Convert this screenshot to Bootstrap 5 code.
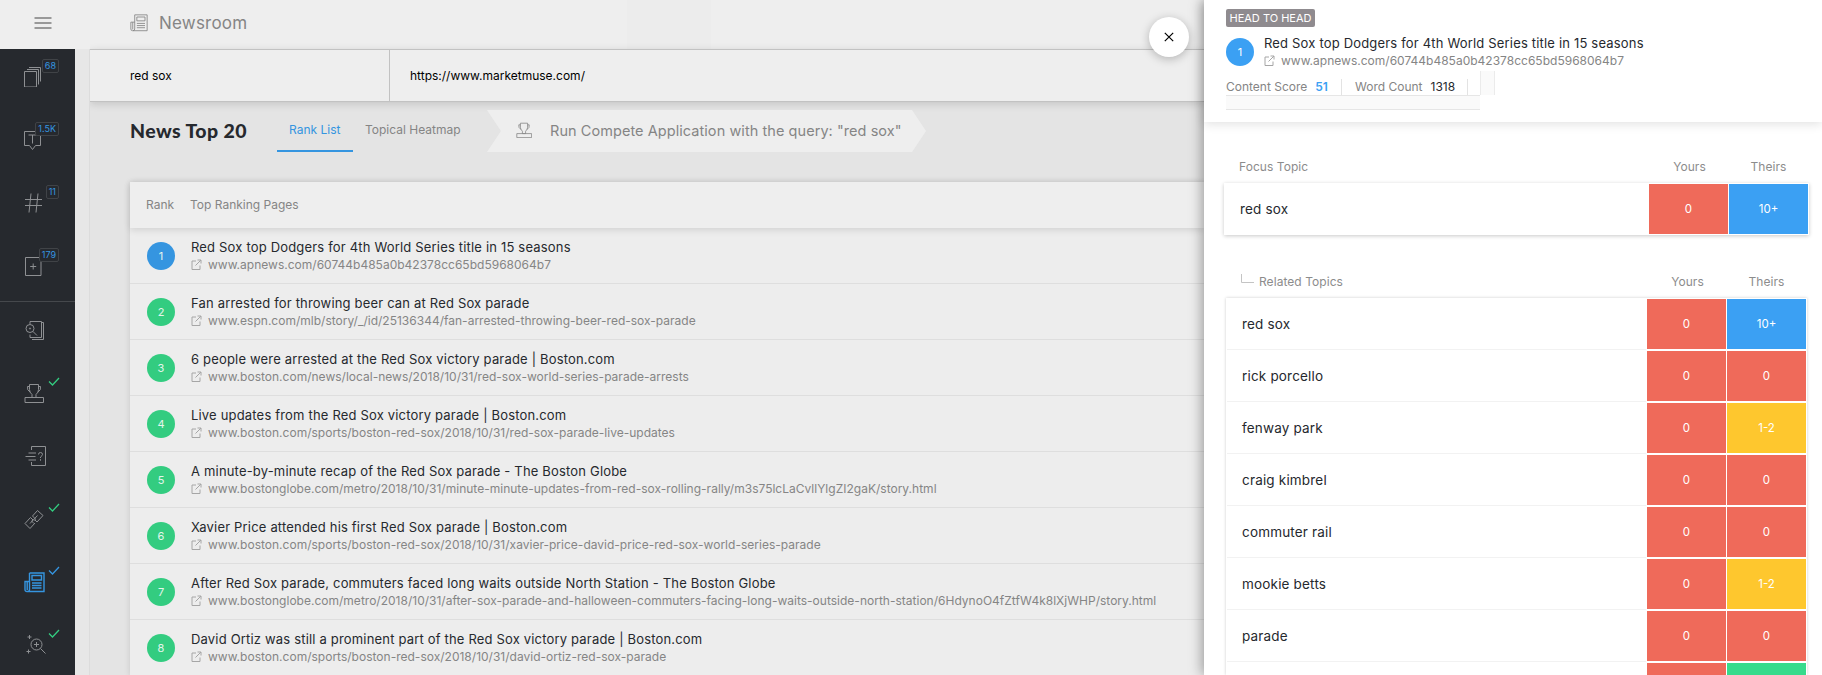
<!DOCTYPE html>
<html lang="en">
<head>
<meta charset="utf-8">
<meta name="viewport" content="width=device-width, initial-scale=1">
<title>Newsroom</title>
<link href="https://cdn.jsdelivr.net/npm/bootstrap@5.3.0/dist/css/bootstrap.min.css" rel="stylesheet">
<style>
  body { font-family: Inter, "Liberation Sans", sans-serif; font-size: 13px; line-height: 16px; color: #26292e; background: #e4e4e4; height: 675px; overflow: hidden; }
  svg { fill: none; stroke: currentColor; display: block; }
  .ink-muted { color: #858585; }
  .rail { width: 75px; height: 675px; overflow: hidden; }
  .rail-top { height: 49px; background: #eee; color: #999; padding-left: 34px; }
  .rail-menu { background: #26292e; color: #8e9093; }
  .rail-item { height: 63px; padding: 12px 0 0 24px; }
  .rail-item svg { width: 20px; height: 20px; margin-top: 6px; }
  .rail-rule { height: 1px; background: #45484c; }
  .count { position: absolute; right: 16px; top: 10px; height: 14px; padding: 0 2px; border: 1px solid #404347; border-radius: 2px; background: #26292e; color: #3595e0; font-size: 9px; line-height: 12px; }
  .rail-item svg.tick { position: absolute; left: 48px; top: 12px; width: 12px; height: 9px; margin: 0; color: #33cc80; }
  .rail-item.is-on, .rail-item.is-on svg.tick { color: #3595e0; }
  .rail-item.is-on svg:first-child { width: 21px; height: 21px; }
  .gutter { width: 15px; background: #e7e7e7; border-right: 1px solid #dcdcdc; }
  .gutter-top { height: 49px; background: #eee; margin-right: -1px; }
  main { min-width: 0; height: 675px; overflow: hidden; }
  .topbar { height: 49px; padding-left: 40px; padding-bottom: 3px; background: linear-gradient(90deg, #eee 537px, #ececec 537px, #ececec 621px, #eee 621px); font-size: 17px; color: #858585; letter-spacing: .2px; }
  .topbar span { padding-left: 3px; }
  .query { height: 53px; background: #eee; border: solid #c2c2c2; border-width: 1px 0; box-shadow: 0 2px 8px rgba(0,0,0,.14); color: #000; font-size: 12px; }
  .query > div:first-child { width: 300px; padding-left: 40px; border-right: 1px solid #c2c2c2; }
  .query > div:last-child { padding-left: 20px; }
  .toolbar { height: 80px; padding-left: 40px; padding-top: 8px; }
  .toolbar h1 { font: 900 19.500px/41px Lato, sans-serif; width: 147px; margin: 0; letter-spacing: .4px; }
  .tab { height: 42px; line-height: 40px; font-size: 12px; color: #858585; padding: 0 12px; border-bottom: 2px solid transparent; white-space: nowrap; }
  .tab.on { width: 76px; color: #3595e0; border-color: #3595e0; }
  .tab.second { width: 119px; }
  .arrow { height: 42px; width: 439px; margin-left: 15px; padding-left: 29px; background: #eee; clip-path: polygon(0 0, 425px 0, 100% 50%, 425px 100%, 0 100%, 14px 50%); font-size: 14.500px; letter-spacing: .06px; color: #858585; }
  .arrow svg { margin-top: -3px; }
  .arrow span { margin-left: 18px; }
  .board { margin-left: 40px; background: #ededed; box-shadow: 0 0 6px rgba(0,0,0,.13); }
  .board-head { height: 46px; padding-left: 16px; color: #858585; font-size: 12px; background: #eee; box-shadow: 0 2px 7px rgba(0,0,0,.12); position: relative; }
  .board-head span:first-child { width: 44px; }
  .story { height: 56px; padding: 1px 0 0 17px; border-bottom: 1px solid #dedede; gap: 16px; white-space: nowrap; }
  .rank { width: 28px; height: 28px; border-radius: 50%; background: #33cc80; color: #e4f5ec; font-size: 11px; flex: none; }
  .rank.lead-one { background: #3595e0; }
  .headline { font-size: 13px; line-height: 17px; letter-spacing: .18px; }
  .link { font-size: 12px; line-height: 17px; letter-spacing: .01px; color: #858585; gap: 6px; }
  .link svg { width: 11px; height: 11px; color: #a6a6a6; }
  .panel { width: 618px; height: 675px; background: #fff; box-shadow: -2px 0 12px rgba(0,0,0,.35); position: relative; z-index: 3; }
  .close-btn { position: absolute; left: -55px; top: 17px; width: 40px; height: 40px; border: 0; border-radius: 50%; background: #fff; box-shadow: 0 2px 10px rgba(0,0,0,.25); }
  .panel-head { height: 122px; padding: 9px 0 0 22px; box-shadow: 0 2px 10px rgba(0,0,0,.12); flex: none; }
  .tagline { display: inline-block; height: 18px; width: 89px; text-align: center; border-radius: 2px; background: #8f8b8f; color: #fff; font-size: 11px; line-height: 18px; }
  .panel .rank { background: #3ba0f3; color: #fff; }
  .duo { margin-top: 8px; gap: 10px; }
  .facts { height: 24px; margin-top: 2px; font-size: 12px; line-height: 15px; }
  .fact-a { width: 116px; } .fact-b { width: 126px; padding-left: 13px; }
  .fact-a, .fact-b { height: 16px; border-right: 1px solid #e3e3e3; }
  .stub { width: 15px; height: 24px; margin-left: 12px; background: #fafafa; border: solid #ebebeb; border-width: 0 1px; }
  .strip { width: 254px; height: 15px; background: #fafafa; border: solid #e6e6e6; border-width: 1px 0; }
  .heads { color: #8c8c8c; font-size: 12px; letter-spacing: .06px; flex: none; }
  .heads span:nth-last-child(-n+2), .score { width: 79px; text-align: center; }
  .focus-heads { padding: 37px 14px 8px 35px; height: 61px; }
  .related-heads { padding: 39px 16px 0 37px; height: 63px; }
  .related-heads svg { margin-right: 5px; color: #c4c4c4; }
  .focus-box { margin: 0 13px 0 20px; box-shadow: 0 1px 4px rgba(0,0,0,.22); height: 52px; padding: 1px; flex: none; }
  .topics { margin: 0 15px 0 22px; box-shadow: 0 0 3px rgba(0,0,0,.2); padding: 1px 1px 0; min-height: 0; overflow: hidden; }
  .topic { height: 52px; gap: 1px; }
  .topic > div:first-child { padding-left: 15px; height: 51px; line-height: 50px; font-size: 13.500px; letter-spacing: .18px; border-bottom: 1px solid #f2f2f2; }
  .focus-box .topic > div:first-child { border: 0; }
  .score { height: 50px; line-height: 50px; color: #fff; font-size: 11.500px; background: #ef6a5a; }
  .score.s-blue { background: #3ba0f3; } .score.s-gold { background: #fec72e; } .score.s-green { background: #37db8c; }
  .score-mark { color: #3ba0f3; }
</style>
</head>
<body class="d-flex">
<svg width="0" height="0" class="position-absolute">
  <symbol id="news" viewBox="0 0 21 21"><path d="M5.500 1h14.500v18.500H3Q1 19.500 1 17.500V9.500h4.500M3.200 9.500v8.500M5.500 1v16.500q0 2-2 2M8 3.500h9.500v4.500H8zM8 11h9.500M8 13.500h9.500M8 16h9.500"/></symbol>
  <symbol id="cup" viewBox="0 0 20 20"><path d="M1 14.500h18.500v5H1zM5.500 1.500h9v5q0 3-2.500 5v3H8v-3q-2.500-2-2.500-5zM5.500 3.500H3.500q-1 3.500 3 6M14.500 3.500h2q1 3.500-3 6"/></symbol>
  <symbol id="out" viewBox="0 0 11 11"><path d="M5 2H1v8.500h8V6.500M6.500 1h3.500v3.500M10 1L4.500 6.500"/></symbol>
  <symbol id="tick" viewBox="0 0 12 9"><path d="M1 4.500l3.500 3.500L11 1" stroke-width="1.300"/></symbol>
</svg>

<aside class="rail d-flex flex-column flex-shrink-0">
  <div class="rail-top flex-shrink-0 d-flex align-items-start"><svg width="18" height="14" viewBox="0 0 18 14" stroke-width="2" class="mt-3"><path d="M.5 2h17M.5 7h17M.5 12h17"/></svg></div>
  <nav class="rail-menu flex-grow-1">
    <div class="rail-item position-relative"><svg viewBox="0 0 20 20"><path d="M.5 4.500h12v15.500h-12zM3 2.500h11.500v15M5 .5h11.500v14"/></svg><span class="count">68</span></div>
    <div class="rail-item position-relative"><svg viewBox="0 0 20 20"><path d="M.5 1.500h16v14h-5l-3 4-3-4h-5zM4.500 5h8M8.500 5v8.500"/></svg><span class="count">1.5K</span></div>
    <div class="rail-item position-relative"><svg viewBox="0 0 20 20"><path d="M7 .5L5 19.500M14 .5l-2 19M1 6.500h17M1 12.500h17"/></svg><span class="count">11</span></div>
    <div class="rail-item position-relative"><svg viewBox="0 0 20 20"><path d="M1.500 1.500h15.500v18H1.500zM9.200 7.500v6M6.200 10.500h6"/></svg><span class="count">179</span></div>
    <div class="rail-rule"></div>
    <div class="rail-item position-relative"><svg viewBox="0 0 20 20" overflow="visible"><path d="M6 4V1.500h11.500v16H6v-3M8 19.500h11.500v-17h-2"/><circle cx="6" cy="8.500" r="4"/><path d="M9 11.500l4 4"/><circle cx="6" cy="8.500" r=".6"/></svg></div>
    <div class="rail-item position-relative"><svg><use href="#cup"/></svg><svg class="tick"><use href="#tick"/></svg></div>
    <div class="rail-item position-relative"><svg viewBox="0 0 20 20" overflow="visible"><path d="M7.500 4V.5h14v19h-14V16M4.500 7h7.500M1.500 10.500h10M4.500 14h7.500M14.500 8.500q0-2 2-2t2 2q0 1-2 2.500V12M16.500 13.200v1.500"/></svg></div>
    <div class="rail-item position-relative"><svg viewBox="0 0 20 20"><path d="M8.500 7L13.500 1.500l5.500 5-6 6.500-2-2M11 14l-5 5.500-5-5 5.500-6 2.500 2.500M6 14.500L13.500 6.500M8.500 7l3 3-1 1.500M9 11l-1.500 1 2.500 2.500"/></svg><svg class="tick"><use href="#tick"/></svg></div>
    <div class="rail-item position-relative is-on"><svg stroke-width="1.400"><use href="#news"/></svg><svg class="tick"><use href="#tick"/></svg></div>
    <div class="rail-item position-relative"><svg viewBox="0 0 20 20" overflow="visible"><circle cx="12.500" cy="9.500" r="5.500"/><path d="M16.500 13.500l5 5M10 9.500h5M12.500 7v5M5.500 0v4M3.500 2h4M4.500 14.500v4M2.500 16.500h4"/></svg><svg class="tick"><use href="#tick"/></svg></div>
  </nav>
</aside>
<div class="gutter flex-shrink-0"><div class="gutter-top"></div></div>

<main class="flex-grow-1">
  <header class="topbar d-flex align-items-center"><svg width="18" height="18" class="me-2"><use href="#news"/></svg><span>Newsroom</span></header>
  <div class="query d-flex align-items-stretch"><div class="d-flex align-items-center">red sox</div><div class="d-flex align-items-center">https://www.marketmuse.com/</div></div>
  <div class="toolbar d-flex">
    <h1>News Top 20</h1>
    <div class="tab on">Rank List</div>
    <div class="tab second">Topical Heatmap</div>
    <div class="arrow d-flex align-items-center flex-shrink-0"><svg width="16" height="16"><use href="#cup"/></svg><span class="text-nowrap">Run Compete Application with the query: "red sox"</span></div>
  </div>
  <section class="board">
    <div class="board-head d-flex align-items-center"><span>Rank</span><span>Top Ranking Pages</span></div>
    <div class="story d-flex align-items-center"><span class="rank lead-one d-flex align-items-center justify-content-center">1</span><div><div class="headline">Red Sox top Dodgers for 4th World Series title in 15 seasons</div><div class="link d-flex align-items-center"><svg><use href="#out"/></svg><span>www.apnews.com/60744b485a0b42378cc65bd5968064b7</span></div></div></div>
    <div class="story d-flex align-items-center"><span class="rank d-flex align-items-center justify-content-center">2</span><div><div class="headline">Fan arrested for throwing beer can at Red Sox parade</div><div class="link d-flex align-items-center"><svg><use href="#out"/></svg><span>www.espn.com/mlb/story/_/id/25136344/fan-arrested-throwing-beer-red-sox-parade</span></div></div></div>
    <div class="story d-flex align-items-center"><span class="rank d-flex align-items-center justify-content-center">3</span><div><div class="headline">6 people were arrested at the Red Sox victory parade | Boston.com</div><div class="link d-flex align-items-center"><svg><use href="#out"/></svg><span>www.boston.com/news/local-news/2018/10/31/red-sox-world-series-parade-arrests</span></div></div></div>
    <div class="story d-flex align-items-center"><span class="rank d-flex align-items-center justify-content-center">4</span><div><div class="headline">Live updates from the Red Sox victory parade | Boston.com</div><div class="link d-flex align-items-center"><svg><use href="#out"/></svg><span>www.boston.com/sports/boston-red-sox/2018/10/31/red-sox-parade-live-updates</span></div></div></div>
    <div class="story d-flex align-items-center"><span class="rank d-flex align-items-center justify-content-center">5</span><div><div class="headline">A minute-by-minute recap of the Red Sox parade - The Boston Globe</div><div class="link d-flex align-items-center"><svg><use href="#out"/></svg><span>www.bostonglobe.com/metro/2018/10/31/minute-minute-updates-from-red-sox-rolling-rally/m3s75lcLaCvllYlgZI2gaK/story.html</span></div></div></div>
    <div class="story d-flex align-items-center"><span class="rank d-flex align-items-center justify-content-center">6</span><div><div class="headline">Xavier Price attended his first Red Sox parade | Boston.com</div><div class="link d-flex align-items-center"><svg><use href="#out"/></svg><span>www.boston.com/sports/boston-red-sox/2018/10/31/xavier-price-david-price-red-sox-world-series-parade</span></div></div></div>
    <div class="story d-flex align-items-center"><span class="rank d-flex align-items-center justify-content-center">7</span><div><div class="headline">After Red Sox parade, commuters faced long waits outside North Station - The Boston Globe</div><div class="link d-flex align-items-center"><svg><use href="#out"/></svg><span>www.bostonglobe.com/metro/2018/10/31/after-sox-parade-and-halloween-commuters-facing-long-waits-outside-north-station/6HdynoO4fZtfW4k8lXjWHP/story.html</span></div></div></div>
    <div class="story d-flex align-items-center"><span class="rank d-flex align-items-center justify-content-center">8</span><div><div class="headline">David Ortiz was still a prominent part of the Red Sox victory parade | Boston.com</div><div class="link d-flex align-items-center"><svg><use href="#out"/></svg><span>www.boston.com/sports/boston-red-sox/2018/10/31/david-ortiz-red-sox-parade</span></div></div></div>
  </section>
</main>

<aside class="panel d-flex flex-column flex-shrink-0">
  <button class="close-btn d-flex align-items-center justify-content-center" aria-label="Close"><svg width="10" height="10" viewBox="0 0 10 10" stroke-width="1.200"><path d="M.8.800l8.400 8.400M9.200.800L.8 9.200"/></svg></button>
  <div class="panel-head">
    <div class="d-flex"><span class="tagline">HEAD TO HEAD</span></div>
    <div class="duo d-flex align-items-center"><span class="rank d-flex align-items-center justify-content-center">1</span><div><div class="headline">Red Sox top Dodgers for 4th World Series title in 15 seasons</div><div class="link d-flex align-items-center"><svg><use href="#out"/></svg><span>www.apnews.com/60744b485a0b42378cc65bd5968064b7</span></div></div></div>
    <div class="facts d-flex align-items-end"><div class="fact-a"><span class="ink-muted">Content Score</span><b class="fw-semibold ms-2 score-mark">51</b></div><div class="fact-b"><span class="ink-muted">Word Count</span><span class="ms-2">1318</span></div><div class="stub"></div></div>
    <div class="strip"></div>
  </div>
  <div class="heads focus-heads d-flex"><span class="flex-grow-1">Focus Topic</span><span>Yours</span><span>Theirs</span></div>
  <div class="focus-box"><div class="topic d-flex"><div class="flex-grow-1">red sox</div><div class="score">0</div><div class="score s-blue">10+</div></div></div>
  <div class="heads related-heads d-flex"><svg width="13" height="14" viewBox="0 0 13 14"><path d="M.5 0v8.500H13"/></svg><span class="flex-grow-1">Related Topics</span><span>Yours</span><span>Theirs</span></div>
  <div class="topics">
    <div class="topic d-flex"><div class="flex-grow-1">red sox</div><div class="score">0</div><div class="score s-blue">10+</div></div>
    <div class="topic d-flex"><div class="flex-grow-1">rick porcello</div><div class="score">0</div><div class="score">0</div></div>
    <div class="topic d-flex"><div class="flex-grow-1">fenway park</div><div class="score">0</div><div class="score s-gold">1-2</div></div>
    <div class="topic d-flex"><div class="flex-grow-1">craig kimbrel</div><div class="score">0</div><div class="score">0</div></div>
    <div class="topic d-flex"><div class="flex-grow-1">commuter rail</div><div class="score">0</div><div class="score">0</div></div>
    <div class="topic d-flex"><div class="flex-grow-1">mookie betts</div><div class="score">0</div><div class="score s-gold">1-2</div></div>
    <div class="topic d-flex"><div class="flex-grow-1">parade</div><div class="score">0</div><div class="score">0</div></div>
    <div class="topic d-flex"><div class="flex-grow-1"></div><div class="score">&nbsp;</div><div class="score s-green">&nbsp;</div></div>
  </div>
</aside>
<script src="https://cdn.jsdelivr.net/npm/bootstrap@5.3.0/dist/js/bootstrap.bundle.min.js"></script>
</body>
</html>
